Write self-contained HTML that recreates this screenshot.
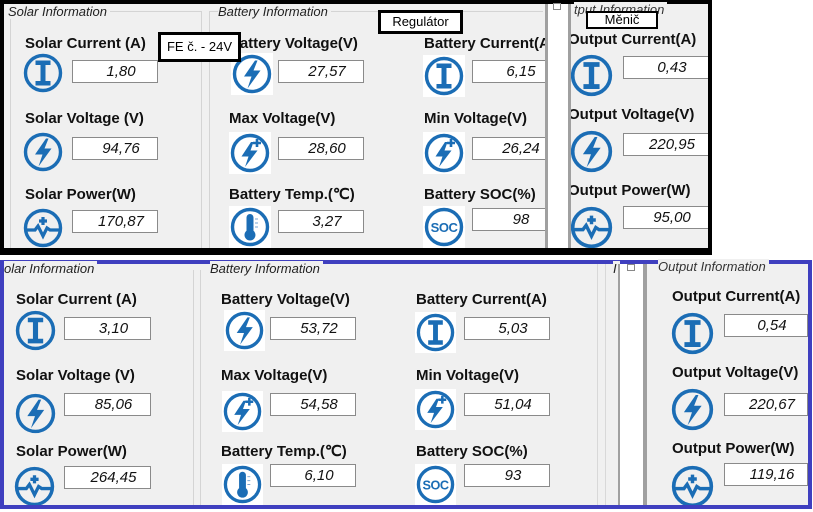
<!DOCTYPE html>
<html><head><meta charset="utf-8"><style>
*{margin:0;padding:0;box-sizing:border-box}
body{width:813px;height:512px;background:#fff;position:relative;overflow:hidden;font-family:"Liberation Sans",Arial,sans-serif}
.a{position:absolute}
.lb{position:absolute;font-weight:bold;font-size:15px;color:#111;white-space:nowrap;line-height:16px;margin-top:2px}
.bx{position:absolute;background:#fff;border:1px solid #8a8a8a;height:23px;font-style:italic;font-size:15px;text-align:center;line-height:21px;color:#111;padding-left:12px}
.ic{position:absolute;width:38px;height:38px}
.wb{background:#fff}
.gt{position:absolute;font-style:italic;font-size:13px;color:#222;white-space:nowrap;background:#f0f0f0;padding-right:3px}
.note{position:absolute;background:#fff;border:3px solid #000;font-size:13px;text-align:center;color:#000}
</style></head><body>
<svg width="0" height="0" style="position:absolute">
<defs>
<g id="ring"><circle cx="20" cy="20" r="17.5" fill="none" stroke="#1b6db5" stroke-width="3.4"/></g>
<g id="iI"><use href="#ring"/><path d="M12.5 7.5h15v4.5h-5v16h5v4.5h-15V28h5V12h-5z" fill="#1b6db5"/></g>
<g id="iB"><use href="#ring"/><path d="M23 6.5L12 22.5H19.5L15.5 34.5L28.5 16.5H21.5L25.5 6.5z" fill="#1b6db5"/></g>
<g id="iBP"><use href="#ring"/><path d="M21 9L11.5 23.5H18.5L15 34L27.5 17.5H20.5L23.5 9z" fill="#1b6db5"/><path d="M27 6v8M23 10h8" stroke="#1b6db5" stroke-width="2.6"/></g>
<g id="iP"><use href="#ring"/><path d="M3.5 22H12L15 18L20 28L24 20L27 22H36.5" fill="none" stroke="#1b6db5" stroke-width="3.2"/><path d="M20 9v8M16 13h8" stroke="#1b6db5" stroke-width="3.2"/></g>
<g id="iT"><use href="#ring"/><rect x="16.5" y="7" width="7" height="20" rx="3.5" fill="#1b6db5"/><circle cx="20" cy="28" r="5.5" fill="#1b6db5"/><path d="M25 12h3M25 16h3M25 20h3" stroke="#7aa6d3" stroke-width="1"/></g>
<g id="iS"><use href="#ring"/><text x="20" y="25" font-family="Liberation Sans,sans-serif" font-weight="bold" font-size="13" fill="#1b6db5" text-anchor="middle" letter-spacing="-0.5">SOC</text></g>
</defs></svg>

<!-- TOP PANEL -->
<div class="a" style="left:0;top:0;width:712px;height:255px;background:#000"></div>
<div class="a" style="left:4px;top:4px;width:704px;height:244px;background:#f0f0f0"></div>
<div class="a" style="left:10px;top:11px;width:192px;height:237px;border:1px solid #d4d4d4;border-bottom:none"></div>
<div class="a" style="left:209px;top:11px;width:334px;height:237px;border:1px solid #d4d4d4;border-bottom:none;border-right:none"></div>
<div class="gt" style="left:8px;top:4px">Solar Information</div>
<div class="gt" style="left:218px;top:4px">Battery Information</div>
<div class="gt" style="left:574px;top:2px;color:#333">tput Information</div>

<div class="lb" style="left:25px;top:34px">Solar Current (A)</div>
<svg class="ic" style="left:23px;top:53px;width:40px;height:40px" viewBox="0 0 40 40"><use href="#iI"/></svg>
<div class="bx" style="left:72px;top:60px;width:86px">1,80</div>
<div class="lb" style="left:25px;top:109px">Solar Voltage (V)</div>
<svg class="ic" style="left:23px;top:132px;width:40px;height:40px" viewBox="0 0 40 40"><use href="#iB"/></svg>
<div class="bx" style="left:72px;top:137px;width:86px">94,76</div>
<div class="lb" style="left:25px;top:185px">Solar Power(W)</div>
<svg class="ic" style="left:23px;top:208px;width:40px;height:40px" viewBox="0 0 40 40"><use href="#iP"/></svg>
<div class="bx" style="left:72px;top:210px;width:86px">170,87</div>

<div class="lb" style="left:229px;top:34px">Battery Voltage(V)</div>
<svg class="ic wb" style="left:231px;top:53px;width:42px;height:42px" viewBox="-1 -1 42 42"><use href="#iB"/></svg>
<div class="bx" style="left:278px;top:60px;width:86px">27,57</div>
<div class="lb" style="left:229px;top:109px">Max Voltage(V)</div>
<svg class="ic wb" style="left:229px;top:132px;width:42px;height:42px" viewBox="-1 -1 42 42"><use href="#iBP"/></svg>
<div class="bx" style="left:278px;top:137px;width:86px">28,60</div>
<div class="lb" style="left:229px;top:185px">Battery Temp.(℃)</div>
<svg class="ic wb" style="left:229px;top:206px;width:42px;height:42px" viewBox="-1 -1 42 42"><use href="#iT"/></svg>
<div class="bx" style="left:278px;top:210px;width:86px">3,27</div>

<div class="lb" style="left:424px;top:34px">Battery Current(A)</div>
<svg class="ic wb" style="left:423px;top:55px;width:42px;height:42px" viewBox="-1 -1 42 42"><use href="#iI"/></svg>
<div class="bx" style="left:472px;top:60px;width:86px">6,15</div>
<div class="lb" style="left:424px;top:109px">Min Voltage(V)</div>
<svg class="ic wb" style="left:423px;top:132px;width:42px;height:42px" viewBox="-1 -1 42 42"><use href="#iBP"/></svg>
<div class="bx" style="left:472px;top:137px;width:86px">26,24</div>
<div class="lb" style="left:424px;top:185px">Battery SOC(%)</div>
<svg class="ic wb" style="left:423px;top:206px;width:42px;height:42px" viewBox="-1 -1 42 42"><use href="#iS"/></svg>
<div class="bx" style="left:472px;top:208px;width:86px">98</div>
<div class="a" style="left:545px;top:4px;width:3px;height:244px;background:#a0a0a0"></div>
<div class="a" style="left:548px;top:4px;width:20px;height:244px;background:#fff"></div>
<div class="a" style="left:568px;top:4px;width:3px;height:244px;background:#a0a0a0"></div>
<div class="a" style="left:553px;top:3px;width:8px;height:7px;border:1px solid #888;background:#fff"></div>

<div class="a" style="left:571px;top:10px;width:137px;height:238px;overflow:hidden">
<div class="lb" style="left:-3px;top:20px">Output Current(A)</div>
<svg class="ic" style="left:-1px;top:44px;width:43px;height:43px" viewBox="0 0 40 40"><use href="#iI"/></svg>
<div class="bx" style="left:52px;top:46px;width:86px">0,43</div>
<div class="lb" style="left:-3px;top:95px">Output Voltage(V)</div>
<svg class="ic" style="left:-1px;top:120px;width:43px;height:43px" viewBox="0 0 40 40"><use href="#iB"/></svg>
<div class="bx" style="left:52px;top:123px;width:86px">220,95</div>
<div class="lb" style="left:-3px;top:171px">Output Power(W)</div>
<svg class="ic" style="left:-1px;top:196px;width:43px;height:43px" viewBox="0 0 40 40"><use href="#iP"/></svg>
<div class="bx" style="left:52px;top:196px;width:86px">95,00</div>
</div>

<div class="note" style="left:158px;top:32px;width:83px;height:30px;line-height:24px">FE č. - 24V</div>
<div class="note" style="left:378px;top:10px;width:85px;height:24px;line-height:18px">Regulátor</div>
<div class="note" style="left:586px;top:11px;width:72px;height:18px;line-height:13px;border-width:2px">Měnič</div>

<!-- BOTTOM PANEL -->
<div class="a" style="left:0;top:260px;width:812px;height:249px;background:#3f3fbf"></div>
<div class="a" style="left:4px;top:264px;width:804px;height:241px;background:#f0f0f0"></div>
<div class="a" style="left:193px;top:270px;width:1px;height:235px;background:#d4d4d4"></div>
<div class="a" style="left:200px;top:270px;width:1px;height:235px;background:#d4d4d4"></div>
<div class="gt" style="left:4px;top:261px">olar Information</div>
<div class="gt" style="left:210px;top:261px">Battery Information</div>
<div class="a" style="left:597px;top:264px;width:1px;height:241px;background:#d8d8d8"></div>
<div class="a" style="left:605px;top:264px;width:1px;height:241px;background:#d8d8d8"></div>
<div class="gt" style="left:613px;top:261px">I</div>
<div class="a" style="left:618px;top:264px;width:2px;height:241px;background:#a0a0a0"></div>
<div class="a" style="left:620px;top:264px;width:23px;height:241px;background:#fff"></div>
<div class="a" style="left:643px;top:264px;width:4px;height:241px;background:#a0a0a0"></div>
<div class="a" style="left:627px;top:264px;width:8px;height:7px;border:1px solid #888;background:#fff"></div>
<div class="gt" style="left:658px;top:259px;color:#333">Output Information</div>

<div class="lb" style="left:16px;top:290px">Solar Current (A)</div>
<svg class="ic" style="left:15px;top:310px;width:41px;height:41px" viewBox="0 0 40 40"><use href="#iI"/></svg>
<div class="bx" style="left:64px;top:317px;width:87px">3,10</div>
<div class="lb" style="left:16px;top:366px">Solar Voltage (V)</div>
<svg class="ic" style="left:15px;top:393px;width:41px;height:41px" viewBox="0 0 40 40"><use href="#iB"/></svg>
<div class="bx" style="left:64px;top:393px;width:87px">85,06</div>
<div class="lb" style="left:16px;top:442px">Solar Power(W)</div>
<svg class="ic" style="left:14px;top:466px;width:41px;height:41px" viewBox="0 0 40 40"><use href="#iP"/></svg>
<div class="bx" style="left:64px;top:466px;width:87px">264,45</div>

<div class="lb" style="left:221px;top:290px">Battery Voltage(V)</div>
<svg class="ic wb" style="left:224px;top:310px;width:41px;height:41px" viewBox="-1 -1 42 42"><use href="#iB"/></svg>
<div class="bx" style="left:270px;top:317px;width:86px">53,72</div>
<div class="lb" style="left:221px;top:366px">Max Voltage(V)</div>
<svg class="ic wb" style="left:222px;top:391px;width:41px;height:41px" viewBox="-1 -1 42 42"><use href="#iBP"/></svg>
<div class="bx" style="left:270px;top:393px;width:86px">54,58</div>
<div class="lb" style="left:221px;top:442px">Battery Temp.(℃)</div>
<svg class="ic wb" style="left:222px;top:464px;width:41px;height:41px" viewBox="-1 -1 42 42"><use href="#iT"/></svg>
<div class="bx" style="left:270px;top:464px;width:86px">6,10</div>

<div class="lb" style="left:416px;top:290px">Battery Current(A)</div>
<svg class="ic wb" style="left:415px;top:312px;width:41px;height:41px" viewBox="-1 -1 42 42"><use href="#iI"/></svg>
<div class="bx" style="left:464px;top:317px;width:86px">5,03</div>
<div class="lb" style="left:416px;top:366px">Min Voltage(V)</div>
<svg class="ic wb" style="left:415px;top:389px;width:41px;height:41px" viewBox="-1 -1 42 42"><use href="#iBP"/></svg>
<div class="bx" style="left:464px;top:393px;width:86px">51,04</div>
<div class="lb" style="left:416px;top:442px">Battery SOC(%)</div>
<svg class="ic wb" style="left:415px;top:464px;width:41px;height:41px" viewBox="-1 -1 42 42"><use href="#iS"/></svg>
<div class="bx" style="left:464px;top:464px;width:86px">93</div>

<div class="lb" style="left:672px;top:287px">Output Current(A)</div>
<svg class="ic" style="left:671px;top:312px;width:43px;height:43px" viewBox="0 0 40 40"><use href="#iI"/></svg>
<div class="bx" style="left:724px;top:314px;width:84px">0,54</div>
<div class="lb" style="left:672px;top:363px">Output Voltage(V)</div>
<svg class="ic" style="left:671px;top:388px;width:43px;height:43px" viewBox="0 0 40 40"><use href="#iB"/></svg>
<div class="bx" style="left:724px;top:393px;width:84px">220,67</div>
<div class="lb" style="left:672px;top:439px">Output Power(W)</div>
<svg class="ic" style="left:671px;top:465px;width:43px;height:43px" viewBox="0 0 40 40"><use href="#iP"/></svg>
<div class="bx" style="left:724px;top:463px;width:84px">119,16</div>
<div class="a" style="left:0;top:505px;width:812px;height:4px;background:#3f3fbf"></div>
<div class="a" style="left:808px;top:260px;width:4px;height:249px;background:#3f3fbf"></div>
</body></html>
